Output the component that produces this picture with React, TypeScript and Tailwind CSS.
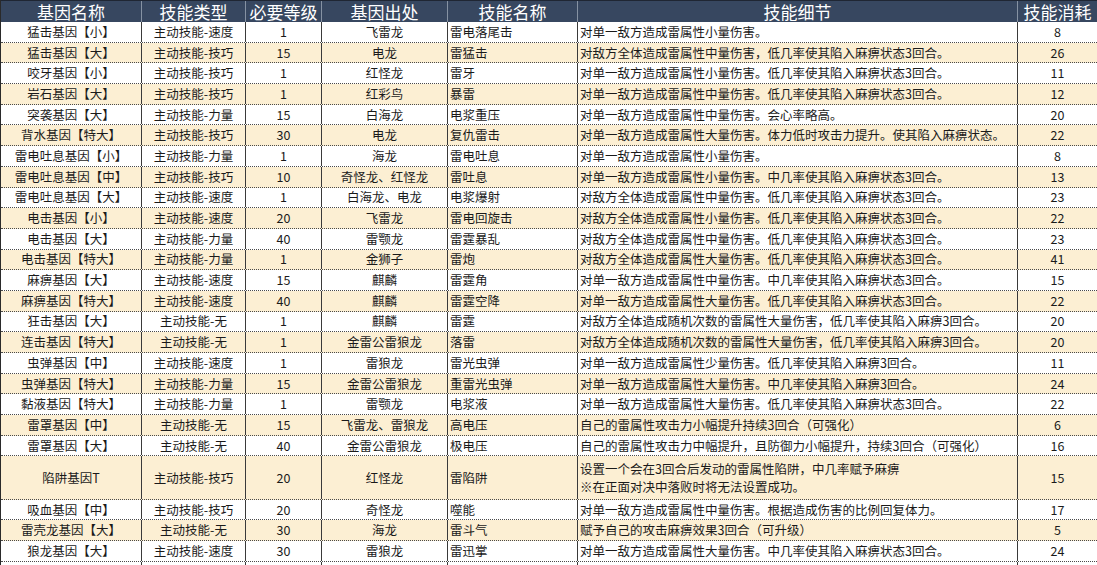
import React from "react";

type Row = [string, string, string, string, string, string, string];

const rows: Row[] = [
  ["猛击基因【小】", "主动技能-速度", "1", "飞雷龙", "雷电落尾击", "对单一敌方造成雷属性小量伤害。", "8"],
  ["猛击基因【大】", "主动技能-技巧", "15", "电龙", "雷猛击", "对敌方全体造成雷属性中量伤害，低几率使其陷入麻痹状态3回合。", "26"],
  ["咬牙基因【小】", "主动技能-技巧", "1", "红怪龙", "雷牙", "对单一敌方造成雷属性小量伤害。低几率使其陷入麻痹状态3回合。", "11"],
  ["岩石基因【大】", "主动技能-技巧", "1", "红彩鸟", "暴雷", "对单一敌方造成雷属性中量伤害。低几率使其陷入麻痹状态3回合。", "12"],
  ["突袭基因【大】", "主动技能-力量", "15", "白海龙", "电浆重压", "对单一敌方造成雷属性中量伤害。会心率略高。", "20"],
  ["背水基因【特大】", "主动技能-技巧", "30", "电龙", "复仇雷击", "对单一敌方造成雷属性大量伤害。体力低时攻击力提升。使其陷入麻痹状态。", "22"],
  ["雷电吐息基因【小】", "主动技能-力量", "1", "海龙", "雷电吐息", "对单一敌方造成雷属性小量伤害。", "8"],
  ["雷电吐息基因【中】", "主动技能-技巧", "10", "奇怪龙、红怪龙", "雷吐息", "对单一敌方造成雷属性小量伤害。中几率使其陷入麻痹状态3回合。", "13"],
  ["雷电吐息基因【大】", "主动技能-速度", "1", "白海龙、电龙", "电浆爆射", "对敌方全体造成雷属性中量伤害。低几率使其陷入麻痹状态3回合。", "23"],
  ["电击基因【小】", "主动技能-速度", "20", "飞雷龙", "雷电回旋击", "对敌方全体造成雷属性小量伤害。低几率使其陷入麻痹状态3回合。", "22"],
  ["电击基因【大】", "主动技能-力量", "40", "雷颚龙", "雷霆暴乱", "对敌方全体造成雷属性中量伤害。低几率使其陷入麻痹状态3回合。", "23"],
  ["电击基因【特大】", "主动技能-力量", "1", "金狮子", "雷炮", "对敌方全体造成雷属性大量伤害。低几率使其陷入麻痹状态3回合。", "41"],
  ["麻痹基因【大】", "主动技能-速度", "15", "麒麟", "雷霆角", "对单一敌方造成雷属性中量伤害。中几率使其陷入麻痹状态3回合。", "15"],
  ["麻痹基因【特大】", "主动技能-速度", "40", "麒麟", "雷霆空降", "对单一敌方造成雷属性大量伤害。低几率使其陷入麻痹状态3回合。", "22"],
  ["狂击基因【大】", "主动技能-无", "1", "麒麟", "雷霆", "对敌方全体造成随机次数的雷属性大量伤害，低几率使其陷入麻痹3回合。", "20"],
  ["连击基因【特大】", "主动技能-无", "1", "金雷公雷狼龙", "落雷", "对敌方全体造成随机次数的雷属性大量伤害，低几率使其陷入麻痹3回合。", "20"],
  ["虫弹基因【中】", "主动技能-速度", "1", "雷狼龙", "雷光虫弹", "对单一敌方造成雷属性少量伤害。低几率使其陷入麻痹3回合。", "11"],
  ["虫弹基因【特大】", "主动技能-力量", "15", "金雷公雷狼龙", "重雷光虫弹", "对单一敌方造成雷属性大量伤害。中几率使其陷入麻痹3回合。", "24"],
  ["黏液基因【特大】", "主动技能-力量", "1", "雷颚龙", "电浆液", "对单一敌方造成雷属性大量伤害。低几率使其陷入麻痹状态3回合。", "22"],
  ["雷罩基因【中】", "主动技能-无", "15", "飞雷龙、雷狼龙", "高电压", "自己的雷属性攻击力小幅提升持续3回合（可强化）", "6"],
  ["雷罩基因【大】", "主动技能-无", "40", "金雷公雷狼龙", "极电压", "自己的雷属性攻击力中幅提升，且防御力小幅提升，持续3回合（可强化）", "16"],
  ["陷阱基因T", "主动技能-技巧", "20", "红怪龙", "雷陷阱", "设置一个会在3回合后发动的雷属性陷阱，中几率赋予麻痹\n※在正面对决中落败时将无法设置成功。", "15"],
  ["吸血基因【中】", "主动技能-技巧", "20", "奇怪龙", "噬能", "对单一敌方造成雷属性中量伤害。根据造成伤害的比例回复体力。", "17"],
  ["雷壳龙基因【大】", "主动技能-无", "30", "海龙", "雷斗气", "赋予自己的攻击麻痹效果3回合（可升级）", "5"],
  ["狼龙基因【大】", "主动技能-速度", "30", "雷狼龙", "雷迅掌", "对单一敌方造成雷属性大量伤害。中几率使其陷入麻痹状态3回合。", "24"],
];

const headers = ["基因名称", "技能类型", "必要等级", "基因出处", "技能名称", "技能细节", "技能消耗"];

const gridCols = "grid grid-cols-[141px_104px_76px_126px_130px_440px_80px]";

function Cell({ idx, text }: { idx: number; text: string }) {
  const left = idx === 4 || idx === 5;
  const lines = text.split("\n");
  return (
    <div
      className={
        "flex h-full min-w-0 flex-col justify-center overflow-hidden whitespace-nowrap border-r border-[#3a3a3a] leading-[18px] " +
        (left ? "items-start pl-[2px]" : "items-center")
      }
    >
      {lines.map((l, i) => (
        <span key={i}>{l}</span>
      ))}
    </div>
  );
}

export default function App() {
  return (
    <div
      className="h-[565px] w-[1097px] overflow-hidden bg-white text-[12.5px] text-[#1a1a1a]"
      style={{ fontFamily: '"Noto Sans CJK SC", "Noto Sans", sans-serif' }}
    >
      <div className="border-l border-[#2a2a2a]">
        <div className={gridCols + " h-[22px] border-t border-[#1f2633] bg-[#374760] text-[17px] text-white"}>
          {headers.map((h, i) => (
            <div
              key={i}
              className="flex h-full items-center justify-center border-r border-[#8692a3] leading-none"
            >
              {h}
            </div>
          ))}
        </div>
        {rows.map((r, i) => (
          <div
            key={i}
            className={
              gridCols +
              " border-b border-dotted border-[#4a4a4a] " +
              (i === 21 ? "h-[43.3px] " : "h-[20.7px] ") +
              (i % 2 === 1 ? "bg-[#fcefd3]" : "bg-white")
            }
          >
            {r.map((c, j) => (
              <Cell key={j} idx={j} text={c} />
            ))}
          </div>
        ))}
        <div className={gridCols + " h-[20.7px] bg-white"}>
          {headers.map((_, j) => (
            <Cell key={j} idx={j} text="" />
          ))}
        </div>
      </div>
    </div>
  );
}
